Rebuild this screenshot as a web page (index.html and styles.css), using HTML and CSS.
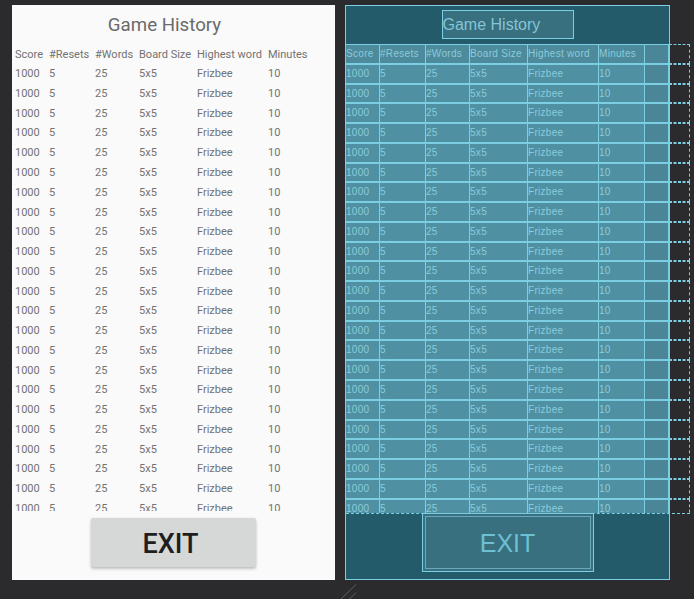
FILE: index.html
```html
<!DOCTYPE html>
<html>
<head>
<meta charset="utf-8">
<link rel="stylesheet" href="styles.css">
</head>
<body>
<div class="editor">
  <section class="design">
    <div class="title">Game History</div>
    <div class="scroll">
      <div class="row head"><span>Score</span><span>#Resets</span><span>#Words</span><span>Board Size</span><span>Highest word</span><span>Minutes</span></div>
      <div class="row"><span>1000</span><span>5</span><span>25</span><span>5x5</span><span>Frizbee</span><span>10</span></div>
      <div class="row"><span>1000</span><span>5</span><span>25</span><span>5x5</span><span>Frizbee</span><span>10</span></div>
      <div class="row"><span>1000</span><span>5</span><span>25</span><span>5x5</span><span>Frizbee</span><span>10</span></div>
      <div class="row"><span>1000</span><span>5</span><span>25</span><span>5x5</span><span>Frizbee</span><span>10</span></div>
      <div class="row"><span>1000</span><span>5</span><span>25</span><span>5x5</span><span>Frizbee</span><span>10</span></div>
      <div class="row"><span>1000</span><span>5</span><span>25</span><span>5x5</span><span>Frizbee</span><span>10</span></div>
      <div class="row"><span>1000</span><span>5</span><span>25</span><span>5x5</span><span>Frizbee</span><span>10</span></div>
      <div class="row"><span>1000</span><span>5</span><span>25</span><span>5x5</span><span>Frizbee</span><span>10</span></div>
      <div class="row"><span>1000</span><span>5</span><span>25</span><span>5x5</span><span>Frizbee</span><span>10</span></div>
      <div class="row"><span>1000</span><span>5</span><span>25</span><span>5x5</span><span>Frizbee</span><span>10</span></div>
      <div class="row"><span>1000</span><span>5</span><span>25</span><span>5x5</span><span>Frizbee</span><span>10</span></div>
      <div class="row"><span>1000</span><span>5</span><span>25</span><span>5x5</span><span>Frizbee</span><span>10</span></div>
      <div class="row"><span>1000</span><span>5</span><span>25</span><span>5x5</span><span>Frizbee</span><span>10</span></div>
      <div class="row"><span>1000</span><span>5</span><span>25</span><span>5x5</span><span>Frizbee</span><span>10</span></div>
      <div class="row"><span>1000</span><span>5</span><span>25</span><span>5x5</span><span>Frizbee</span><span>10</span></div>
      <div class="row"><span>1000</span><span>5</span><span>25</span><span>5x5</span><span>Frizbee</span><span>10</span></div>
      <div class="row"><span>1000</span><span>5</span><span>25</span><span>5x5</span><span>Frizbee</span><span>10</span></div>
      <div class="row"><span>1000</span><span>5</span><span>25</span><span>5x5</span><span>Frizbee</span><span>10</span></div>
      <div class="row"><span>1000</span><span>5</span><span>25</span><span>5x5</span><span>Frizbee</span><span>10</span></div>
      <div class="row"><span>1000</span><span>5</span><span>25</span><span>5x5</span><span>Frizbee</span><span>10</span></div>
      <div class="row"><span>1000</span><span>5</span><span>25</span><span>5x5</span><span>Frizbee</span><span>10</span></div>
      <div class="row"><span>1000</span><span>5</span><span>25</span><span>5x5</span><span>Frizbee</span><span>10</span></div>
      <div class="row"><span>1000</span><span>5</span><span>25</span><span>5x5</span><span>Frizbee</span><span>10</span></div>
    </div>
    <div class="bottom">
      <button class="exit">EXIT</button>
    </div>
  </section>

  <section class="blueprint">
    <div class="bp-title"><div class="bp-title-box">Game History</div></div>
    <div class="bp-scroll">
      <div class="bp-row head"><span>Score</span><span>#Resets</span><span>#Words</span><span>Board Size</span><span>Highest word</span><span>Minutes</span><span class="spare"></span><span class="ext"></span></div>
      <div class="bp-row"><span>1000</span><span>5</span><span>25</span><span>5x5</span><span>Frizbee</span><span>10</span><span class="spare"></span><span class="ext"></span></div>
      <div class="bp-row"><span>1000</span><span>5</span><span>25</span><span>5x5</span><span>Frizbee</span><span>10</span><span class="spare"></span><span class="ext"></span></div>
      <div class="bp-row"><span>1000</span><span>5</span><span>25</span><span>5x5</span><span>Frizbee</span><span>10</span><span class="spare"></span><span class="ext"></span></div>
      <div class="bp-row"><span>1000</span><span>5</span><span>25</span><span>5x5</span><span>Frizbee</span><span>10</span><span class="spare"></span><span class="ext"></span></div>
      <div class="bp-row"><span>1000</span><span>5</span><span>25</span><span>5x5</span><span>Frizbee</span><span>10</span><span class="spare"></span><span class="ext"></span></div>
      <div class="bp-row"><span>1000</span><span>5</span><span>25</span><span>5x5</span><span>Frizbee</span><span>10</span><span class="spare"></span><span class="ext"></span></div>
      <div class="bp-row"><span>1000</span><span>5</span><span>25</span><span>5x5</span><span>Frizbee</span><span>10</span><span class="spare"></span><span class="ext"></span></div>
      <div class="bp-row"><span>1000</span><span>5</span><span>25</span><span>5x5</span><span>Frizbee</span><span>10</span><span class="spare"></span><span class="ext"></span></div>
      <div class="bp-row"><span>1000</span><span>5</span><span>25</span><span>5x5</span><span>Frizbee</span><span>10</span><span class="spare"></span><span class="ext"></span></div>
      <div class="bp-row"><span>1000</span><span>5</span><span>25</span><span>5x5</span><span>Frizbee</span><span>10</span><span class="spare"></span><span class="ext"></span></div>
      <div class="bp-row"><span>1000</span><span>5</span><span>25</span><span>5x5</span><span>Frizbee</span><span>10</span><span class="spare"></span><span class="ext"></span></div>
      <div class="bp-row"><span>1000</span><span>5</span><span>25</span><span>5x5</span><span>Frizbee</span><span>10</span><span class="spare"></span><span class="ext"></span></div>
      <div class="bp-row"><span>1000</span><span>5</span><span>25</span><span>5x5</span><span>Frizbee</span><span>10</span><span class="spare"></span><span class="ext"></span></div>
      <div class="bp-row"><span>1000</span><span>5</span><span>25</span><span>5x5</span><span>Frizbee</span><span>10</span><span class="spare"></span><span class="ext"></span></div>
      <div class="bp-row"><span>1000</span><span>5</span><span>25</span><span>5x5</span><span>Frizbee</span><span>10</span><span class="spare"></span><span class="ext"></span></div>
      <div class="bp-row"><span>1000</span><span>5</span><span>25</span><span>5x5</span><span>Frizbee</span><span>10</span><span class="spare"></span><span class="ext"></span></div>
      <div class="bp-row"><span>1000</span><span>5</span><span>25</span><span>5x5</span><span>Frizbee</span><span>10</span><span class="spare"></span><span class="ext"></span></div>
      <div class="bp-row"><span>1000</span><span>5</span><span>25</span><span>5x5</span><span>Frizbee</span><span>10</span><span class="spare"></span><span class="ext"></span></div>
      <div class="bp-row"><span>1000</span><span>5</span><span>25</span><span>5x5</span><span>Frizbee</span><span>10</span><span class="spare"></span><span class="ext"></span></div>
      <div class="bp-row"><span>1000</span><span>5</span><span>25</span><span>5x5</span><span>Frizbee</span><span>10</span><span class="spare"></span><span class="ext"></span></div>
      <div class="bp-row"><span>1000</span><span>5</span><span>25</span><span>5x5</span><span>Frizbee</span><span>10</span><span class="spare"></span><span class="ext"></span></div>
      <div class="bp-row"><span>1000</span><span>5</span><span>25</span><span>5x5</span><span>Frizbee</span><span>10</span><span class="spare"></span><span class="ext"></span></div>
      <div class="bp-row"><span>1000</span><span>5</span><span>25</span><span>5x5</span><span>Frizbee</span><span>10</span><span class="spare"></span><span class="ext"></span></div>
    </div>
    <div class="bp-bottom">
      <div class="bp-exit"><div class="bp-exit-inner">EXIT</div></div>
    </div>
  </section>
</div>
<svg class="resize" width="18" height="16" viewBox="0 0 18 16"><path d="M0.5 15.5 L16 0.5 M9 15.5 L16 8.5" stroke="#5c5d60" stroke-width="1" fill="none"/></svg>
</body>
</html>
```

FILE: styles.css
```css
html, body {
  margin: 0;
  padding: 0;
  background: #2b2b2d;
  width: 694px;
  height: 599px;
  overflow: hidden;
}

.editor {
  display: flex;
  gap: 10px;
  padding: 5px 0 0 12px;
  align-items: flex-start;
}

/* ---------- design view ---------- */
.design {
  width: 323px;
  height: 575px;
  background: #fafafa;
  display: flex;
  flex-direction: column;
  font-family: Roboto, "Liberation Sans", sans-serif;
}

.title {
  height: 39px;
  display: flex;
  align-items: center;
  justify-content: center;
  font-size: 18.7px;
  color: #6a6a6a;
  padding-right: 18px;
  padding-top: 1px;
  box-sizing: border-box;
}

.scroll {
  height: 467px;
  overflow: hidden;
}

.row {
  display: grid;
  grid-template-columns: 34px 46px 44px 58px 71px 46px;
  height: 19.77px;
  align-items: center;
  font-size: 11px;
  color: #727272;
}

.row.head {
  padding-top: 1px;
  box-sizing: border-box;
}

.row span {
  padding-left: 3px;
  white-space: nowrap;
}

.bottom {
  flex: 1;
  display: flex;
  justify-content: center;
  padding-top: 7px;
}

.exit {
  width: 165px;
  height: 49px;
  border: none;
  border-radius: 2px;
  background: #d6d7d7;
  box-shadow: 0 2px 3px rgba(0, 0, 0, 0.22), 0 0 2px rgba(0, 0, 0, 0.08);
  font-family: Roboto, "Liberation Sans", sans-serif;
  font-weight: 500;
  font-size: 27px;
  color: #1e1e1e;
  padding: 2px 6px 0 0;
}

/* ---------- blueprint view ---------- */
.blueprint {
  width: 323px;
  height: 573px;
  border: 1px solid #7ccfe3;
  background: #235b6b;
  display: flex;
  flex-direction: column;
  font-family: "Liberation Sans", Arial, sans-serif;
}

.bp-title {
  height: 38px;
  display: flex;
  justify-content: center;
  padding-top: 4px;
  box-sizing: border-box;
}

.bp-title-box {
  width: 132px;
  height: 29px;
  box-sizing: border-box;
  border: 1px solid #7ccfe3;
  background: #38707f;
  color: #84c5d5;
  font-size: 16px;
  line-height: 27px;
  padding-left: 0;
}

.bp-scroll {
  width: 344px;
  height: 470px;
  overflow: hidden;
  box-sizing: border-box;
  border-bottom: 1px dashed #7ccfe3;
}

.bp-row {
  display: grid;
  grid-template-columns: 34px 46px 44px 58px 71px 46px 24px 21px;
  height: 19.77px;
}

.bp-row span {
  box-sizing: border-box;
  background: #4f90a2;
  border-top: 1px solid #7ccfe3;
  border-bottom: 1px solid #7ccfe3;
  border-right: 1px solid #7ccfe3;
  font-size: 10px;
  letter-spacing: 0.3px;
  color: #8ccbdb;
  line-height: 17px;
  white-space: nowrap;
  overflow: hidden;
}

.bp-row.head span {
  background: #4c8a9c;
  line-height: 18px;
}

.bp-row span.spare {
  background: #4a8698;
  border-right: 1px solid #7ccfe3;
}

.bp-row span.ext {
  background: transparent;
  border-top: 1px dashed #7ccfe3;
  border-bottom: 1px dashed #7ccfe3;
  border-right: 1px dashed #7ccfe3;
}

.bp-bottom {
  flex: 1;
  display: flex;
  justify-content: center;
}

.bp-exit {
  width: 172px;
  height: 59px;
  box-sizing: border-box;
  border: 1px solid #7ccfe3;
  padding: 2px;
  background: #38707f;
  margin-top: -1px;
}

.bp-exit-inner {
  height: 100%;
  box-sizing: border-box;
  border: 1px solid #6aa9ba;
  display: flex;
  align-items: center;
  justify-content: center;
  font-size: 25px;
  color: #6dbfd2;
  padding-top: 2px;
}

.resize {
  position: absolute;
  left: 340px;
  top: 584px;
}
```
